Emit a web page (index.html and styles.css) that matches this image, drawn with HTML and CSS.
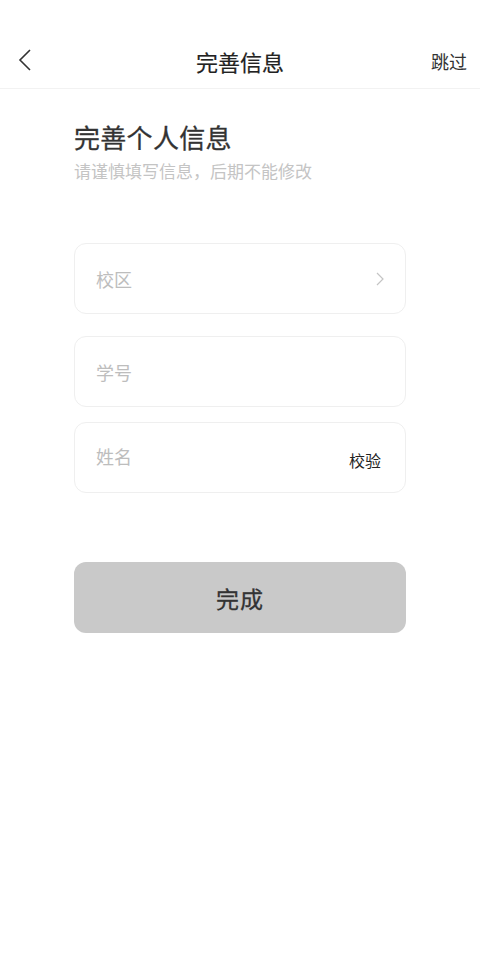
FILE: index.html
```html
<!DOCTYPE html>
<html lang="zh">
<head>
<meta charset="utf-8">
<link rel="stylesheet" href="styles.css">
</head>
<body>
<header class="nav">
  <span class="back"><svg width="14" height="22" viewBox="0 0 14 22"><path d="M12 1 L2 11 L12 21" fill="none" stroke="#333" stroke-width="1.6"/></svg></span>
  <h1 class="nav-title">完善信息</h1>
  <span class="skip">跳过</span>
</header>
<main class="content">
  <h2 class="title">完善个人信息</h2>
  <p class="subtitle">请谨慎填写信息，后期不能修改</p>
  <div class="fields">
    <div class="field field-center"><span class="ph">校区</span><svg class="arrow" width="8" height="14" viewBox="0 0 8 14"><path d="M1 1 L7 7 L1 13" fill="none" stroke="#c4c4c4" stroke-width="1.2"/></svg></div>
    <div class="field field-center gap1"><span class="ph">学号</span></div>
    <div class="field field-name gap2"><span class="ph">姓名</span><span class="verify">校验</span></div>
  </div>
  <button class="done">完成</button>
</main>
</body>
</html>
```
FILE: styles.css
```css
* { box-sizing: border-box; margin: 0; padding: 0; }
body {
  width: 480px; height: 960px; background: #fff;
  font-family: "Noto Sans CJK SC", "Noto Sans", sans-serif;
  color: #333;
}
.nav {
  height: 89px; padding-top: 40px;
  display: flex; align-items: center; justify-content: space-between;
  border-bottom: 1px solid #f2f2f2;
  padding-left: 18px; padding-right: 13px;
  position: relative;
}
.back { display: flex; width: 14px; height: 22px; margin-bottom: 8px; }
.nav-title {
  position: absolute; left: 0; right: 0; top: 40px; height: 42px;
  display: flex; align-items: center; justify-content: center;
  font-size: 22px; font-weight: 400; color: #222; pointer-events: none;
  -webkit-text-stroke: 0.2px #222;
}
.skip { font-size: 18px; color: #333; margin-bottom: 6px; }
.content { padding: 0 74px; }
.title { font-size: 26px; font-weight: 400; color: #333; margin-top: 30px; line-height: 36px; letter-spacing: 0.3px; -webkit-text-stroke: 0.3px #333; }
.subtitle { font-size: 17px; color: #c4c4c4; margin-top: 3px; line-height: 26px; }
.fields { margin-top: 59px; display: flex; flex-direction: column; }
.field {
  height: 71px; border: 1px solid #efefef; border-radius: 12px;
  display: flex; padding: 0 21px 0 21px; justify-content: space-between;
}
.field-center { align-items: center; }
.gap1 { margin-top: 22px; }
.gap2 { margin-top: 15px; }
.field-name { align-items: flex-start; padding-top: 20px; padding-right: 24px; }
.ph { font-size: 18px; color: #bdbdbd; line-height: 26px; }
.arrow { margin-right: 0; }
.verify { font-size: 16px; color: #222; margin-top: 4px; line-height: 26px; }
.done {
  margin-top: 69px; width: 332px; height: 71px; border: none; border-radius: 12px;
  background: #c9c9c9; color: #333; font-size: 23px; font-weight: 400;
  font-family: "Noto Sans CJK SC", "Noto Sans", sans-serif;
  letter-spacing: 1px; -webkit-text-stroke: 0.3px #333;
}
```
